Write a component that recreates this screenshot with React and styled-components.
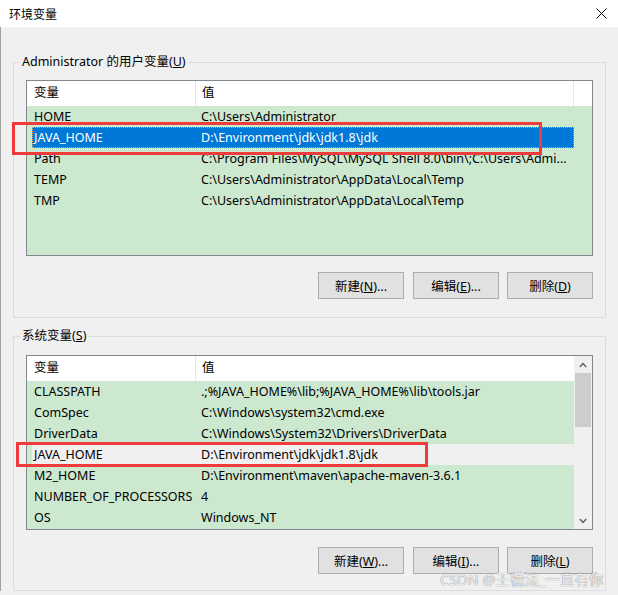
import styled, { createGlobalStyle } from "styled-components";

const GlobalStyle = createGlobalStyle`
  *, *::before, *::after { box-sizing: border-box; }
  html, body { margin: 0; padding: 0; background: #f0f0f0; }
  body {
    font-family: "Noto Sans", "Noto Sans CJK SC", sans-serif;
    font-size: 12.5px;
    color: #000;
  }
`;

const userVars = [
  { name: "HOME", value: "C:\\Users\\Administrator" },
  { name: "JAVA_HOME", value: "D:\\Environment\\jdk\\jdk1.8\\jdk", state: "selected" },
  { name: "Path", value: "C:\\Program Files\\MySQL\\MySQL Shell 8.0\\bin\\;C:\\Users\\Admi..." },
  { name: "TEMP", value: "C:\\Users\\Administrator\\AppData\\Local\\Temp" },
  { name: "TMP", value: "C:\\Users\\Administrator\\AppData\\Local\\Temp" },
];

const systemVars = [
  { name: "CLASSPATH", value: ".;%JAVA_HOME%\\lib;%JAVA_HOME%\\lib\\tools.jar" },
  { name: "ComSpec", value: "C:\\Windows\\system32\\cmd.exe" },
  { name: "DriverData", value: "C:\\Windows\\System32\\Drivers\\DriverData" },
  { name: "JAVA_HOME", value: "D:\\Environment\\jdk\\jdk1.8\\jdk", state: "inactive" },
  { name: "M2_HOME", value: "D:\\Environment\\maven\\apache-maven-3.6.1" },
  { name: "NUMBER_OF_PROCESSORS", value: "4" },
  { name: "OS", value: "Windows_NT" },
];

const Window = styled.div`
  position: relative;
  width: 618px;
  height: 595px;
  overflow: hidden;
  background: #f0f0f0;
`;

const TitleBar = styled.div`
  height: 27px;
  background: #fff;
  display: flex;
  align-items: center;
  justify-content: space-between;
  padding: 0 11px 0 9px;
  font-size: 12px;
`;

const Body = styled.div`
  border-left: 1px solid #a0a0a0;
  padding: 27px 12px 0 12px;
`;

const Group = styled.fieldset`
  margin: 0;
  width: 593px;
  min-width: 0;
  border: 1px solid #dcdcdc;
  padding: ${(p) => p.$pad};
  & + & {
    margin-top: 10px;
  }
`;

const Legend = styled.legend`
  padding: 0 2px;
  margin-left: -6px;
  line-height: 16px;
  font-size: 12.5px;
`;

const ListView = styled.div`
  height: ${(p) => p.$h}px;
  border: 1px solid #828790;
  background: #cce8cf;
  display: flex;
`;

const ListMain = styled.div`
  flex: 1;
  min-width: 0;
  display: flex;
  flex-direction: column;
`;

const Header = styled.div`
  display: grid;
  grid-template-columns: 169px 378px 1fr;
  height: 25px;
  background: #fff;
  flex-shrink: 0;
`;

const HeadCell = styled.div`
  line-height: 24px;
  padding-left: ${(p) => p.$pl || 6}px;
  border-right: ${(p) => (p.$last ? "none" : "1px solid #e5e5e5")};
`;

const Row = styled.div`
  display: grid;
  grid-template-columns: 164px 1fr;
  height: 21px;
  line-height: 21px;
  margin-left: 5px;
  width: 542px;
  white-space: nowrap;
  background: ${(p) =>
    p.$state === "selected" ? "#0078d7" : p.$state === "inactive" ? "#f0f0f0" : "transparent"};
  color: ${(p) => (p.$state === "selected" ? "#fff" : "#000")};
  outline: ${(p) => (p.$state === "selected" ? "1px dotted #f7a040" : "none")};
  outline-offset: -1px;
`;

const Cell = styled.div`
  padding-left: ${(p) => p.$pl}px;
  overflow: hidden;
  text-overflow: ellipsis;
`;

const ScrollBar = styled.div`
  width: 18px;
  flex-shrink: 0;
  background: #f0f0f0;
  display: flex;
  flex-direction: column;
`;

const ArrowBox = styled.div`
  height: 17px;
  display: flex;
  align-items: center;
  justify-content: center;
  flex-shrink: 0;
`;

const Thumb = styled.div`
  height: 54px;
  margin: 0 1px;
  background: #cdcdcd;
`;

const Track = styled.div`
  flex: 1;
`;

const ButtonRow = styled.div`
  display: flex;
  justify-content: flex-end;
  gap: 9px;
  margin-top: ${(p) => p.$gap}px;
`;

const Button = styled.button`
  width: 86px;
  height: 27px;
  background: #e1e1e1;
  border: 1px solid #adadad;
  border-radius: 0;
  font-family: inherit;
  font-size: 12.5px;
  color: #000;
  padding: 0;
  & + & + & {
    margin-left: -1px;
  }
`;

const Highlight = styled.div`
  position: absolute;
  border: 3px solid #ef3b3b;
  pointer-events: none;
`;

const Watermark = styled.div`
  position: absolute;
  left: 440px;
  top: 568px;
  font-size: 14.5px;
  color: rgba(255, 255, 255, 0.9);
  text-shadow: 0 0 1px rgba(0, 0, 0, 0.4), 0 0 1px rgba(0, 0, 0, 0.3);
  white-space: nowrap;
`;

function Chevron({ up }) {
  return (
    <svg width="8" height="6" viewBox="0 0 8 6">
      <polyline
        points={up ? "0.8,5 4,1.5 7.2,5" : "0.8,1 4,4.5 7.2,1"}
        fill="none"
        stroke="#606060"
        strokeWidth="1.5"
      />
    </svg>
  );
}

function VarList({ rows, height, scroll }) {
  return (
    <ListView $h={height}>
      <ListMain>
        <Header>
          <HeadCell $pl={7}>变量</HeadCell>
          <HeadCell $last={scroll}>值</HeadCell>
          <HeadCell $last />
        </Header>
        {rows.map((r) => (
          <Row key={r.name} $state={r.state}>
            <Cell $pl={2}>{r.name}</Cell>
            <Cell $pl={5}>{r.value}</Cell>
          </Row>
        ))}
      </ListMain>
      {scroll && (
        <ScrollBar>
          <ArrowBox>
            <Chevron up />
          </ArrowBox>
          <Thumb />
          <Track />
          <ArrowBox>
            <Chevron />
          </ArrowBox>
        </ScrollBar>
      )}
    </ListView>
  );
}

export default function App() {
  return (
    <Window>
      <GlobalStyle />
      <TitleBar>
        <span>环境变量</span>
        <svg width="11" height="11" viewBox="0 0 11 11">
          <path d="M0.5 0.5 L10.5 10.5 M10.5 0.5 L0.5 10.5" stroke="#000" strokeWidth="1" />
        </svg>
      </TitleBar>
      <Body>
        <Group $pad="10px 12px 18px 12px">
          <Legend>
            Administrator 的用户变量(<u>U</u>)
          </Legend>
          <VarList rows={userVars} height={176} />
          <ButtonRow $gap={16}>
            <Button>
              新建(<u>N</u>)...
            </Button>
            <Button>
              编辑(<u>E</u>)...
            </Button>
            <Button>
              删除(<u>D</u>)
            </Button>
          </ButtonRow>
        </Group>
        <Group $pad="11px 12px 16px 12px">
          <Legend>
            系统变量(<u>S</u>)
          </Legend>
          <VarList rows={systemVars} height={175} scroll />
          <ButtonRow $gap={17}>
            <Button>
              新建(<u>W</u>)...
            </Button>
            <Button>
              编辑(<u>I</u>)...
            </Button>
            <Button>
              删除(<u>L</u>)
            </Button>
          </ButtonRow>
        </Group>
      </Body>
      <Highlight style={{ left: 12, top: 122, width: 530, height: 33 }} />
      <Highlight style={{ left: 16, top: 442, width: 412, height: 25 }} />
      <Watermark>CSDN @王德法_一直有你</Watermark>
    </Window>
  );
}
